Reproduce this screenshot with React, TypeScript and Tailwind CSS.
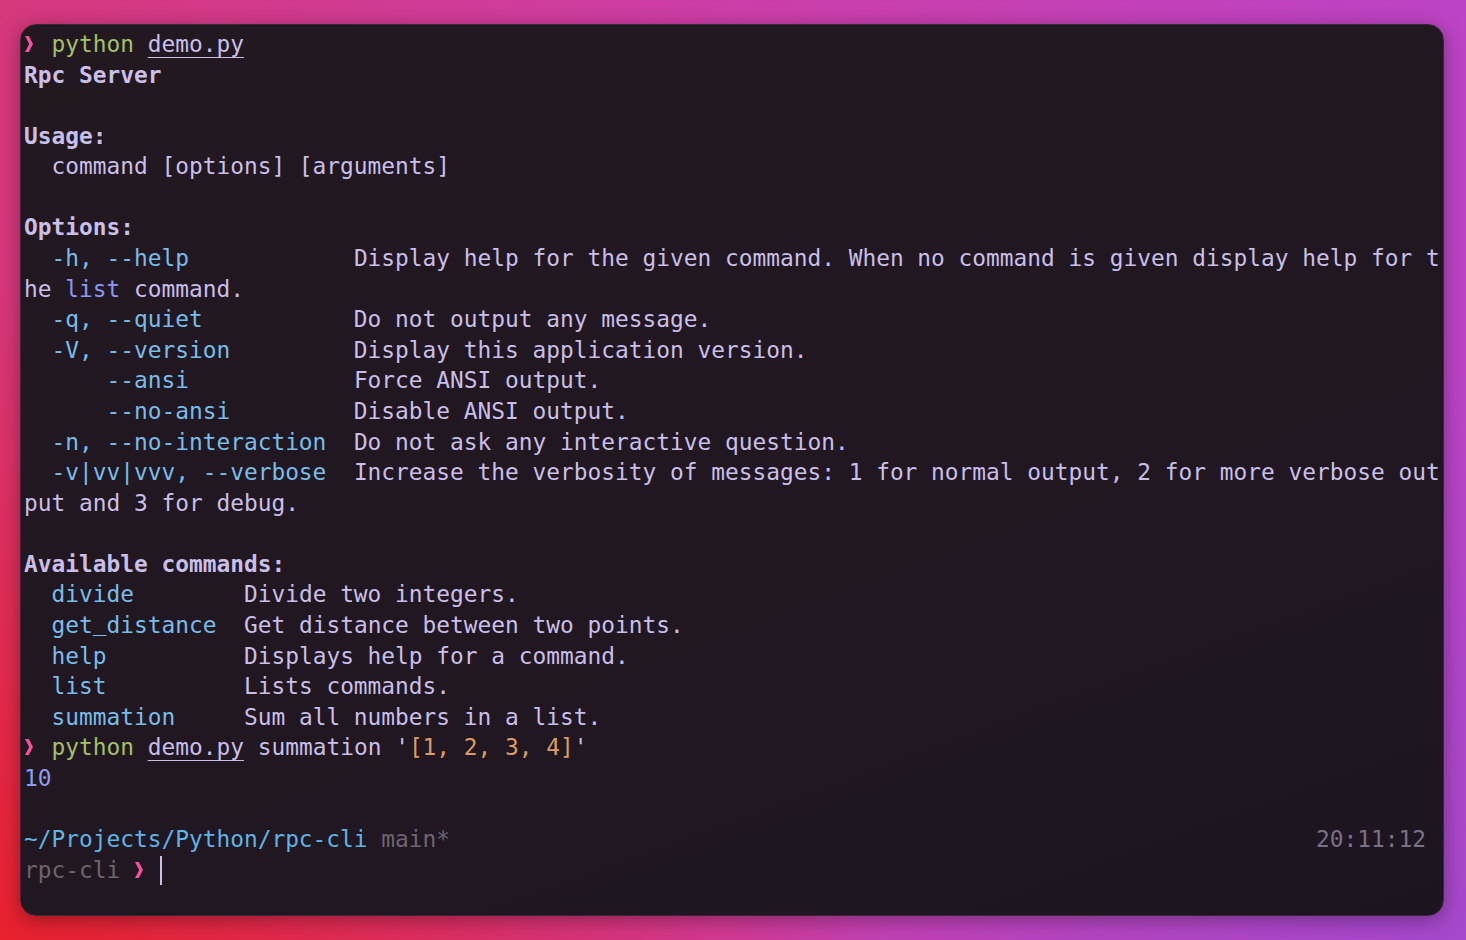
import React from "react";

function Chevron() {
  return (
    <span className="inline-block w-[13.75px] h-[30.58px] align-top relative">
      <svg
        className="absolute left-[1px] top-[7px]"
        width="9"
        height="16"
        viewBox="0 0 9 16"
      >
        <polygon points="0,0 3.8,0 8,8 3.8,16 0,16 4.2,8" fill="#f7509f" />
      </svg>
    </span>
  );
}

function Line({ children, className = "" }: { children?: React.ReactNode; className?: string }) {
  return (
    <div className={`h-[30.58px] leading-[30.58px] whitespace-pre ${className}`}>
      {children ?? " "}
    </div>
  );
}

const B = ({ children }: { children: React.ReactNode }) => (
  <span className="text-[#78bde9]">{children}</span>
);

export default function App() {
  const opts: [string, string][] = [
    ["  -q, --quiet", "Do not output any message."],
    ["  -V, --version", "Display this application version."],
    ["      --ansi", "Force ANSI output."],
    ["      --no-ansi", "Disable ANSI output."],
    ["  -n, --no-interaction", "Do not ask any interactive question."],
  ];
  const cmds: [string, string][] = [
    ["divide", "Divide two integers."],
    ["get_distance", "Get distance between two points."],
    ["help", "Displays help for a command."],
    ["list", "Lists commands."],
    ["summation", "Sum all numbers in a list."],
  ];
  const pad = (s: string, n: number) => s + " ".repeat(Math.max(0, n - s.length));

  const renderCmd = (c: string) => {
    const parts = c.split("_");
    return parts.map((p, i) => (
      <React.Fragment key={i}>
        {i > 0 && <span className="relative -top-[3px]">_</span>}
        {p}
      </React.Fragment>
    ));
  };

  return (
    <div className="w-[1466px] h-[940px] flex pt-[24px] pl-[20px] pr-[22px] pb-[24px] bg-[radial-gradient(ellipse_60%_70%_at_0%_100%,#e8212d_0%,rgba(232,33,45,0)_100%),radial-gradient(ellipse_50%_60%_at_100%_100%,#a548cc_0%,rgba(165,72,204,0)_100%),linear-gradient(90deg,#d6387c_0%,#cc3ea8_50%,#bc44c6_100%)]">
      <div
        className="flex-1 rounded-[16px] border border-[#3b2737] bg-[linear-gradient(160deg,#221820_0%,#201721_60%,#1c1520_100%)] shadow-[0_4px_20px_rgba(0,0,0,0.35)] pt-[4px] pl-[3px] pr-[17px] text-[22.84px] text-[#c9bfe8] overflow-hidden"
        style={{ fontFamily: '"DejaVu Sans Mono", "Liberation Mono", monospace' }}
      >
        <Line>
          <Chevron />
          {" "}
          <span className="text-[#a3c16a]">python</span>{" "}
          <span className="underline decoration-1 underline-offset-[5px]">demo.py</span>
        </Line>
        <Line className="font-bold">Rpc Server</Line>
        <Line />
        <Line className="font-bold">Usage:</Line>
        <Line>  command [options] [arguments]</Line>
        <Line />
        <Line className="font-bold">Options:</Line>
        <Line>
          <B>  -h, --help</B>
          {pad("", 24 - 12)}Display help for the given command. When no command is given display help for t
        </Line>
        <Line>
          he <span className="text-[#8a98f2]">list</span> command.
        </Line>
        {opts.map(([o, d]) => (
          <Line key={o}>
            <B>{o}</B>
            {pad("", 24 - o.length)}
            {d}
          </Line>
        ))}
        <Line>
          <B>  -v|vv|vvv, --verbose</B>
          {"  "}Increase the verbosity of messages: 1 for normal output, 2 for more verbose out
        </Line>
        <Line>put and 3 for debug.</Line>
        <Line />
        <Line className="font-bold">Available commands:</Line>
        {cmds.map(([c, d]) => (
          <Line key={c}>
            {"  "}
            <B>{renderCmd(c)}</B>
            {pad("", 14 - c.length)}
            {d}
          </Line>
        ))}
        <Line>
          <Chevron />
          {" "}
          <span className="text-[#a3c16a]">python</span>{" "}
          <span className="underline decoration-1 underline-offset-[5px]">demo.py</span> summation{" "}
          '<span className="text-[#dc9c62]">[1, 2, 3, 4]</span>'
        </Line>
        <Line className="text-[#8c9cf0]">10</Line>
        <Line />
        <div className="h-[30.58px] leading-[30.58px] whitespace-pre flex justify-between">
          <span>
            <span className="text-[#5fb4e6]">~/Projects/Python/rpc-cli</span>{" "}
            <span className="text-[#6f6570]">main*</span>
          </span>
          <span className="text-[#7b7184]">20:11:12</span>
        </div>
        <Line>
          <span className="text-[#6f6468]">rpc-cli</span> <Chevron />{" "}
          <span className="inline-block w-[1.5px] h-[29px] align-middle bg-[#c9bfe8] -ml-[1px] -mt-[2px]" />
        </Line>
      </div>
    </div>
  );
}
